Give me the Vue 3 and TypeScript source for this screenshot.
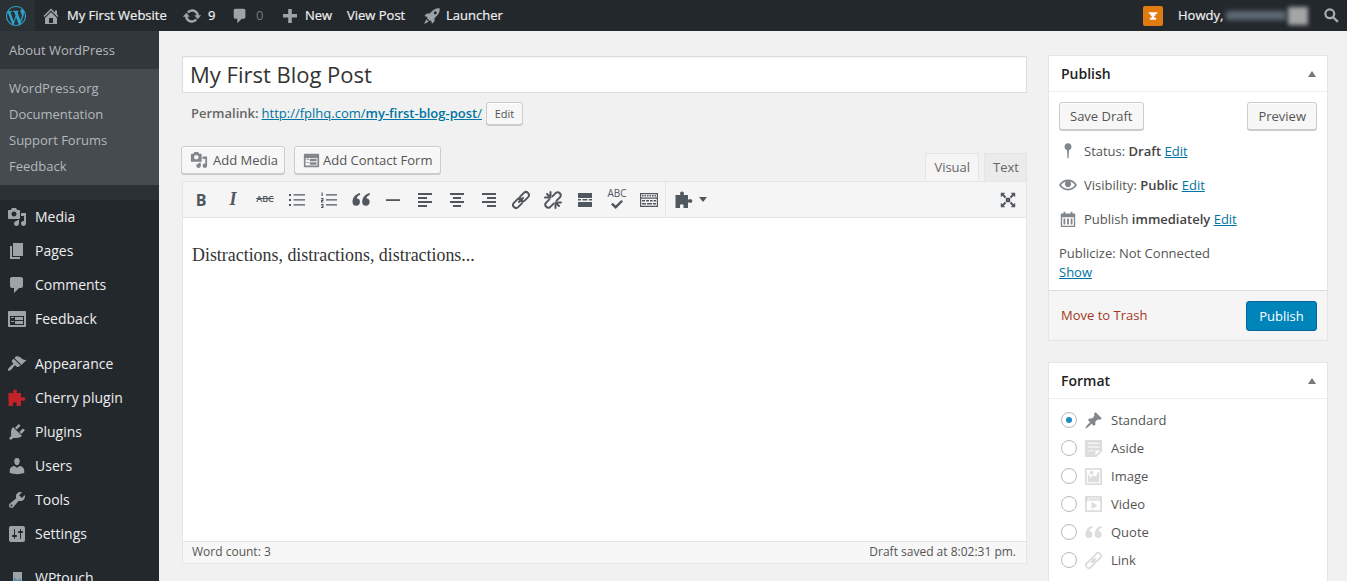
<script setup lang="ts">
const p: Record<string, string> = {
  wp: 'M20 10c0-5.51-4.49-10-10-10C4.48 0 0 4.49 0 10c0 5.52 4.48 10 10 10 5.51 0 10-4.48 10-10zM7.78 15.37L4.37 6.22c.55-.02 1.17-.08 1.17-.08.5-.06.44-1.13-.06-1.11 0 0-1.45.11-2.37.11-.18 0-.37 0-.58-.01C4.12 2.69 6.87 1.11 10 1.11c2.33 0 4.45.87 6.05 2.34-.68-.11-1.65.39-1.65 1.58 0 .74.45 1.36.9 2.1.35.61.55 1.36.55 2.46 0 1.49-1.4 5-1.4 5l-3.03-8.37c.54-.02.82-.17.82-.17.5-.05.44-1.25-.06-1.22 0 0-1.44.12-2.38.12-.87 0-2.33-.12-2.33-.12-.5-.03-.56 1.2-.06 1.22l.92.08 1.26 3.41zM17.41 10c.24-.64.74-1.87.43-4.25.7 1.29 1.05 2.71 1.05 4.25 0 3.29-1.73 6.24-4.4 7.78.97-2.59 1.94-5.2 2.92-7.78zM6.1 18.09C3.12 16.65 1.11 13.53 1.11 10c0-1.3.23-2.48.72-3.59C3.25 10.3 4.67 14.2 6.1 18.09zm4.03-6.63l2.58 6.98c-.86.29-1.76.45-2.71.45-.79 0-1.57-.11-2.29-.33.81-2.38 1.62-4.74 2.42-7.1z',
  home: 'M16 8.5l1.53 1.53-1.06 1.06L10 4.62l-6.47 6.47-1.06-1.06L10 2.5l4 4v-2h2v4zm-6-2.46l6 5.99V18H4v-5.97zM12 17v-5H8v5h4z',
  update: 'M10.2 3.28c3.53 0 6.43 2.61 6.92 6h2.08l-3.5 4-3.5-4h2.32c-.45-1.97-2.21-3.45-4.32-3.45-1.45 0-2.73.71-3.54 1.78L4.95 5.66C6.23 4.2 8.11 3.28 10.2 3.28zm-.4 13.44c-3.52 0-6.43-2.61-6.92-6H.8l3.5-4c1.17 1.33 2.33 2.67 3.5 4H5.48c.45 1.97 2.21 3.45 4.32 3.45 1.45 0 2.73-.71 3.54-1.78l1.71 1.95c-1.28 1.46-3.15 2.38-5.25 2.38z',
  comment: 'M5 2h9c1.1 0 2 .9 2 2v7c0 1.1-.9 2-2 2h-2l-5 5v-5H5c-1.1 0-2-.9-2-2V4c0-1.1.9-2 2-2z',
  plus: 'M17 8v3.5h-5.2V17H8.2v-5.5H3V8h5.2V3h3.6v5z',
  rocket: 'M18.5 1.5c-3.2-.4-6 .7-8.6 3.3L7.5 7.2H4.2L1.5 10l3.4 1-.4 1.4 3.1 3.1 1.4-.4 1 3.4 2.8-2.7v-3.3l2.4-2.4c2.6-2.6 3.7-5.4 3.3-8.6zM13.6 8.2a1.7 1.7 0 1 1 0-3.4 1.7 1.7 0 0 1 0 3.4zM3.7 13.6 1.2 18.8l5.2-2.5z',
  media: 'M13 11V4c0-.55-.45-1-1-1h-1.67L9 1H5L3.67 3H2c-.55 0-1 .45-1 1v7c0 .55.45 1 1 1h10c.55 0 1-.45 1-1zM7 4.5c1.38 0 2.5 1.12 2.5 2.5S8.38 9.5 7 9.5 4.5 8.38 4.5 7 5.62 4.5 7 4.5zM14 6h5v10.5c0 1.38-1.12 2.5-2.5 2.5S14 17.88 14 16.5s1.12-2.5 2.5-2.5c.17 0 .34.02.5.05V9h-3V6zm-4 8.05V13h2v3.5c0 1.38-1.12 2.5-2.5 2.5S7 17.88 7 16.5 8.12 14 9.5 14c.17 0 .34.02.5.05z',
  page: 'M6 15V2h10v13H6zm-1 1h8v2H3V5h2v11z',
  feedback: 'M2 2h16c.55 0 1 .45 1 1v14c0 .55-.45 1-1 1H2c-.55 0-1-.45-1-1V3c0-.55.45-1 1-1zm15 14V7H3v9h14zM4 8v1h3V8H4zm4 0v3h8V8H8zm-4 4v1h3v-1H4zm4 0v3h8v-3H8z',
  brush: 'M14.48 11.06L7.41 3.99l1.5-1.5c.5-.56 2.3-.47 3.51.32 1.21.8 1.43 1.28 2.91 2.1 1.18.64 2.45 1.26 4.45.85zm-.71.71L6.7 4.7 4.93 6.47c-.39.39-.39 1.02 0 1.41l1.06 1.06c.39.39.39 1.03 0 1.42-.6.6-1.43 1.11-2.21 1.69-.35.26-.7.53-1.01.84-1.34 1.34-2.36 3.02-1.64 3.74.69.69 2.39-.31 3.72-1.65.3-.31.58-.66.84-1.01.58-.78 1.09-1.61 1.69-2.21.39-.39 1.03-.39 1.42 0l1.06 1.06c.39.39 1.02.39 1.41 0z',
  puzzle: 'M8 1.5a2 2 0 0 1 2 2c0 .7-.4 1.1-.6 1.5H14v4.400h1.400a1.900 1.900 0 1 1 0 3.200H14V18H9.500v-1.500a1.800 1.800 0 1 0-3.500 0V18H1.500V5h5.100c-.2-.4-.6-.8-.6-1.500a2 2 0 0 1 2-2z',
  plugin: 'M13.11 4.36L9.87 7.6 8 5.73l3.24-3.24c.35-.34 1.05-.2 1.56.32.52.51.66 1.21.31 1.55zm-8 1.77l.91-1.12 9.01 9.01-1.19.84c-.71.71-2.63 1.16-3.82 1.16H6.14L4.9 17.26c-.59.59-1.54.59-2.12 0-.59-.58-.59-1.53 0-2.12l1.24-1.24v-3.88c0-1.13.4-3.19 1.09-3.89zm7.26 3.97l3.24-3.24c.34-.35 1.04-.21 1.55.31.52.51.66 1.21.31 1.55l-3.24 3.25z',
  users: 'M10 9.25c-2.27 0-2.73-3.44-2.73-3.44C7 4.02 7.82 2 9.97 2c2.16 0 2.98 2.02 2.71 3.81 0 0-.41 3.44-2.68 3.44zm0 2.57L12.72 10c2.39 0 4.52 2.33 4.52 4.53v2.49s-3.65 1.13-7.24 1.13c-3.65 0-7.24-1.13-7.24-1.13v-2.49c0-2.25 1.94-4.48 4.47-4.48z',
  tools: 'M16.68 9.77c-1.34 1.34-3.3 1.67-4.95.99l-5.41 6.52c-.99.99-2.59.99-3.58 0s-.99-2.59 0-3.57l6.52-5.42c-.68-1.65-.35-3.61.99-4.95 1.28-1.28 3.12-1.62 4.72-1.06l-2.89 2.89 2.82 2.82 2.86-2.87c.53 1.58.18 3.39-1.08 4.65zM3.81 16.21c.4.39 1.04.39 1.43 0 .4-.4.4-1.04 0-1.43-.39-.4-1.03-.4-1.43 0-.39.39-.39 1.03 0 1.43z',
  settings: 'M18 16V4c0-1.1-.9-2-2-2H4c-1.1 0-2 .9-2 2v12c0 1.1.9 2 2 2h12c1.1 0 2-.9 2-2zM8 11h1c.55 0 1 .45 1 1s-.45 1-1 1H8v1.500c0 .28-.22.5-.5.5s-.5-.22-.5-.5V13H6c-.55 0-1-.45-1-1s.45-1 1-1h1V5.500c0-.28.22-.5.5-.5s.5.22.5.5V11zm5-2h-1c-.55 0-1-.45-1-1s.45-1 1-1h1V5.500c0-.28.22-.5.5-.5s.5.22.5.5V7h1c.55 0 1 .45 1 1s-.45 1-1 1h-1v5.500c0 .28-.22.5-.5.5s-.5-.22-.5-.5V9z',
  wptouch: 'M6 4h9v16H6z',
  pin: 'M10 1.500a3.800 3.800 0 0 1 1.100 7.440L10.600 18h-1.200l-.5-9.060A3.800 3.800 0 0 1 10 1.500z',
  eye: 'M19.700 9.400C17.700 6 14 3.900 10 3.900S2.300 6 .3 9.400L0 10l.3.6c2 3.400 5.700 5.500 9.700 5.500s7.700-2.100 9.700-5.500l.3-.6-.3-.6zM10 14.100c-3.100 0-6-1.600-7.700-4.100C3.600 8 5.700 6.600 8 6.100c-.9.6-1.500 1.700-1.500 2.900 0 1.900 1.600 3.500 3.500 3.500s3.500-1.600 3.500-3.500c0-1.200-.6-2.300-1.500-2.900 2.300.5 4.400 1.900 5.700 3.900-1.700 2.500-4.600 4.100-7.700 4.100z',
  calendar: 'M2 4h3V2h2v2h6V2h2v2h3v15H2zM3.500 8v9.500h13V8zM5 9.500h2v6.500H5zM9 9.500h2v6.500H9zM13 9.500h2v6.500h-2z',
  thumb: 'M10.440 3.020l1.820-1.820 6.360 6.350-1.830 1.820c-1.050-.68-2.480-.57-3.410.36l-.75.75c-.92.93-1.040 2.350-.35 3.410l-1.830 1.820-2.410-2.410-2.800 2.790c-.42.42-3.380 2.710-3.800 2.290s1.860-3.390 2.280-3.810l2.790-2.790L4.100 9.360l1.830-1.820c1.050.69 2.480.57 3.400-.36l.75-.75c.93-.92 1.050-2.350.36-3.410z',
  aside: 'M1 1h18v12l-6 6H1V1zm3 3v1h12V4H4zm0 4v1h12V8H4zm6 5v-1H4v1h6zm2 4l5-5h-5v5z',
  image: 'M2.250 1h15.500c.69 0 1.250.56 1.250 1.250v15.500c0 .69-.56 1.250-1.250 1.250H2.250C1.560 19 1 18.440 1 17.750V2.250C1 1.560 1.560 1 2.250 1zM17 17V3H3v14h14zM10 6c0-1.100-.9-2-2-2s-2 .9-2 2 .9 2 2 2 2-.9 2-2zm3 5s0-6 3-6v10c0 .55-.45 1-1 1H5c-.55 0-1-.45-1-1V8c2 0 3 4 3 4s1-3 3-3 3 2 3 2z',
  video: 'M2 1h16c.55 0 1 .45 1 1v16l-18-.02V2c0-.55.45-1 1-1zm4 1L4 5h1l2-3H6zm4 0H9L7 5h1zm3 0h-1l-2 3h1zm3 0h-1l-2 3h1zm1 14V6H3v10h14zM8 7l6 4-6 4V7z',
  quote: 'M8.800 3C5 4 1.500 7 1.500 12a3.700 3.700 0 1 0 4.200-3.700c.3-1.500 1.500-2.700 3.500-3.500zM18.500 3c-3.800 1-7.300 4-7.300 9a3.700 3.700 0 1 0 4.200-3.700c.3-1.500 1.500-2.700 3.500-3.500z',
  link: 'M9.380 6.380L12.880 2.880A3 3 0 0 1 17.120 7.120L13.620 10.620A3 3 0 0 1 9.380 6.380ZM10.620 13.620L7.120 17.120A3 3 0 0 1 2.880 12.880L6.380 9.380A3 3 0 0 1 10.620 13.620ZM8 12L12 8',
  unlink: 'M9.400 6.400L12.900 2.900A3 3 0 0 1 17.100 7.100L13.600 10.600M10.600 13.600L7.100 17.100A3 3 0 0 1 2.900 12.900L6.400 9.400M4 4L7.500 7.500M16 16L12.500 12.500M7.500 2V5.500M2 7.500H5.500M12.500 18V14.500M18 12.500H14.500',
  ul: 'M2 4h2v2H2zM2 9h2v2H2zM2 14h2v2H2zM6.500 4.300H18v1.300H6.500zM6.500 9.300H18v1.300H6.500zM6.500 14.300H18v1.300H6.500z',
  ol: 'M2.500 2.500h1.200v3.500H2.500zM2 8h2.500v3H3v.6h1.500v.9H2V9.800h1.500v-.9H2zM2 14h2.500v4H2v-.9h1.500v-.7H2.500v-.8h1v-.7H2zM7 4.300h11v1.300H7zM7 9.300h11v1.300H7zM7 14.300h11v1.300H7z',
  hr: 'M3 9.200h14v1.800H3z',
  left: 'M3 3h14v2H3zM3 7h9v2H3zM3 11h14v2H3zM3 15h9v2H3z',
  center: 'M3 3h14v2H3zM6 7h8v2H6zM3 11h14v2H3zM6 15h8v2H6z',
  right: 'M3 3h14v2H3zM8 7h9v2H8zM3 11h14v2H3zM8 15h9v2H8z',
  more: 'M3 3h14v5H3zM3 9h3v1.500H3zM7.500 9h5v1.500h-5zM14 9h3v1.500h-3zM3 12h14v5H3z',
  check: 'M2 8.500 4.300 6.300 8.200 10 15.700 2.500 18 4.700 8.200 14.500z',
  kbd: 'M1 3h18v14H1zM2.200 4.200v3.300h15.600V4.200zM2.200 8.800v7h15.600v-7zM3 5h1.500v1.500H3zM5.500 5H7v1.500H5.500zM8 5h1.500v1.500H8zM10.500 5H12v1.500h-1.500zM13 5h1.500v1.500H13zM15.500 5H17v1.500h-1.500zM3 10h3v1.500H3zM7 10h3v1.500H7zM11 10h2.500v1.500H11zM14.500 10H17v1.500h-2.500zM3 13h4v1.500H3zM8 13h5v1.500H8zM14 13h3v1.500h-3z',
  full: 'M2 2h5L5.300 3.700 8 6.400 6.400 8 3.700 5.300 2 7zM18 2v5l-1.700-1.700L13.600 8 12 6.400l2.700-2.700L13 2zM2 18v-5l1.700 1.700L6.400 12 8 13.600l-2.700 2.700L7 18zM18 18h-5l1.700-1.700L12 13.600l1.600-1.600 2.700 2.700L18 13zM7.500 7.500h5v5h-5z',
  anvil: 'M3 4h14v2.500h-3V9l-2 1.500V13h3v3H5v-3h3v-2.500L6 9V6.500H3z',
}

const stroked = new Set(['link', 'unlink'])

const flyoutLinks = ['WordPress.org', 'Documentation', 'Support Forums', 'Feedback']

const menuGroups = [
  [
    { label: 'Media', icon: 'media' },
    { label: 'Pages', icon: 'page' },
    { label: 'Comments', icon: 'comment' },
    { label: 'Feedback', icon: 'feedback' },
  ],
  [
    { label: 'Appearance', icon: 'brush' },
    { label: 'Cherry plugin', icon: 'puzzle', red: true },
    { label: 'Plugins', icon: 'plugin' },
    { label: 'Users', icon: 'users' },
    { label: 'Tools', icon: 'tools' },
    { label: 'Settings', icon: 'settings' },
  ],
  [{ label: 'WPtouch', icon: 'wptouch' }],
]

const toolIcons = ['ul', 'ol', 'quote', 'hr', 'left', 'center', 'right', 'link', 'unlink', 'more']

const formats = [
  { label: 'Standard', icon: 'thumb', on: true },
  { label: 'Aside', icon: 'aside', on: false },
  { label: 'Image', icon: 'image', on: false },
  { label: 'Video', icon: 'video', on: false },
  { label: 'Quote', icon: 'quote', on: false },
  { label: 'Link', icon: 'link', on: false },
]
</script>

<template>
  <div class="page">
    <header class="bar">
      <div class="bar-wp"><svg class="i20" viewBox="0 0 20 20"><path :d="p.wp" /></svg></div>
      <div class="bar-item site"><svg class="i20" viewBox="0 0 20 20"><path :d="p.home" /></svg><span>My First Website</span></div>
      <div class="bar-item upd"><svg class="i20" viewBox="0 0 20 20"><path :d="p.update" /></svg><span>9</span></div>
      <div class="bar-item com"><svg class="i20" viewBox="0 0 20 20"><path :d="p.comment" /></svg><span class="dim">0</span></div>
      <div class="bar-item new"><svg class="i20" viewBox="0 0 20 20"><path :d="p.plus" /></svg><span>New</span></div>
      <div class="bar-item view"><span>View Post</span></div>
      <div class="bar-item launch"><svg class="i20" viewBox="0 0 20 20"><path :d="p.rocket" /></svg><span>Launcher</span></div>
      <div class="bar-right">
        <div class="orange"><svg viewBox="0 0 20 20"><path :d="p.anvil" /></svg></div>
        <span class="howdy">Howdy,</span>
        <span class="blurred"><i class="b-name"></i><i class="b-ava"></i></span>
        <svg class="search" viewBox="0 0 20 20"><circle cx="8" cy="8" r="5.200" /><path d="M12 12l5.500 5.500" /></svg>
      </div>
    </header>

    <div class="body">
      <aside class="side">
        <div class="fly">
          <div class="fly-top">About WordPress</div>
          <div class="fly-list">
            <div v-for="l in flyoutLinks" :key="l" class="fly-link">{{ l }}</div>
          </div>
        </div>
        <div class="strip"></div>
        <nav v-for="(g, gi) in menuGroups" :key="gi" class="group">
          <div v-for="m in g" :key="m.label" class="mi">
            <svg class="mi-ico" :class="{ red: 'red' in m }" viewBox="0 0 20 20">
              <path :d="p[m.icon]" fill-rule="evenodd" />
              <path v-if="m.icon === 'wptouch'" class="teal" d="M7 9l3 3 4-1.500V19H7z" />
            </svg>
            <span>{{ m.label }}</span>
          </div>
        </nav>
      </aside>

      <main class="main">
        <section class="col">
          <div class="title">My First Blog Post</div>
          <div class="perma">
            <b>Permalink:</b>
            <a class="url">http://fplhq.com/<b>my-first-blog-post</b>/</a>
            <span class="btn tiny">Edit</span>
          </div>

          <div class="tools-row">
            <div class="media-btns">
              <span class="btn mbtn"><svg class="m-ico" viewBox="0 0 20 20"><path :d="p.media" /></svg>Add Media</span>
              <span class="btn mbtn contact"><svg class="m-ico" viewBox="0 0 20 20"><path :d="p.feedback" fill-rule="evenodd" /></svg>Add Contact Form</span>
            </div>
            <div class="tabs">
              <span class="tab active">Visual</span>
              <span class="tab">Text</span>
            </div>
          </div>

          <div class="editor">
            <div class="toolbar">
              <span class="tb t-b">B</span>
              <span class="tb t-i">I</span>
              <span class="tb t-abc">ABC</span>
              <span v-for="t in toolIcons" :key="t" class="tb"><svg class="tb-ico" viewBox="0 0 20 20"><path :d="p[t]" :class="{ st: stroked.has(t) }" fill-rule="evenodd" /></svg></span>
              <span class="tb spell"><em>ABC</em><svg viewBox="0 0 20 16"><path :d="p.check" /></svg></span>
              <span class="tb"><svg class="tb-ico" viewBox="0 0 20 20"><path :d="p.kbd" fill-rule="evenodd" /></svg></span>
              <span class="sep"></span>
              <span class="plug"><svg class="tb-ico" viewBox="0 0 20 20"><path :d="p.puzzle" /></svg><i class="caret"></i></span>
              <span class="tb fs"><svg viewBox="0 0 20 20"><path :d="p.full" /></svg></span>
            </div>
            <div class="content">Distractions, distractions, distractions...</div>
            <div class="status"><span>Word count: 3</span><span>Draft saved at 8:02:31 pm.</span></div>
          </div>
        </section>

        <section class="rail">
          <div class="box publish">
            <div class="box-h"><span>Publish</span><i class="up"></i></div>
            <div class="pub-btns">
              <span class="btn act">Save Draft</span>
              <span class="btn act">Preview</span>
            </div>
            <div class="pub-rows">
              <div class="pub-row"><svg class="pub-ico" viewBox="0 0 20 20"><path :d="p.pin" /></svg><span>Status: <b>Draft</b> <a>Edit</a></span></div>
              <div class="pub-row"><svg class="pub-ico" viewBox="0 0 20 20"><path :d="p.eye" /></svg><span>Visibility: <b>Public</b> <a>Edit</a></span></div>
              <div class="pub-row"><svg class="pub-ico" viewBox="0 0 20 20"><path :d="p.calendar" fill-rule="evenodd" /></svg><span>Publish <b>immediately</b> <a>Edit</a></span></div>
            </div>
            <div class="publicize">Publicize: Not Connected<br /><a>Show</a></div>
            <div class="pub-foot">
              <a class="trash">Move to Trash</a>
              <span class="primary">Publish</span>
            </div>
          </div>

          <div class="box format">
            <div class="box-h"><span>Format</span><i class="up"></i></div>
            <div class="fmt-list">
              <div v-for="f in formats" :key="f.label" class="fmt">
                <span class="radio" :class="{ on: f.on }"></span>
                <svg class="fmt-ico" :class="{ on: f.on }" viewBox="0 0 20 20"><path :d="p[f.icon]" :class="{ st: stroked.has(f.icon) }" fill-rule="evenodd" /></svg>
                <span>{{ f.label }}</span>
              </div>
            </div>
          </div>
        </section>
      </main>
    </div>
  </div>
</template>

<style>
html, body { margin: 0; background: #f1f1f1; overflow: hidden; }
</style>

<style scoped>
.page { width: 1347px; height: 581px; overflow: hidden; display: flex; flex-direction: column; font: 13px/1.4 "Open Sans", sans-serif; color: #444; background: #f1f1f1; }
svg { display: block; flex: none; fill: currentColor; }
.st { fill: none; stroke: currentColor; stroke-width: 2; stroke-linecap: round; }
a { color: #0074a2; text-decoration: underline; }

.bar { height: 31px; flex: none; background: #23282d; color: #eee; display: flex; align-items: center; }
.i20 { width: 20px; height: 20px; color: #9ea3a8; }
.bar-wp { width: 35px; height: 31px; box-sizing: border-box; padding-right: 3px; background: #2b3035; display: flex; align-items: center; justify-content: center; margin-right: 6px; }
.bar-wp .i20 { color: #2ea2cc; }
.bar-item { display: flex; align-items: center; gap: 6px; white-space: nowrap; }
.site { width: 141px; gap: 6px; }
.bar-item span { font-weight: 400; -webkit-text-stroke: .2px #eee; }
.upd { width: 49px; gap: 6px; }
.com { width: 49px; gap: 7px; }
.com .i20 { width: 18px; height: 18px; }
.bar-item span.dim { color: #777; -webkit-text-stroke: 0; }
.new { width: 67px; gap: 5px; }
.view { width: 76px; }
.launch { gap: 5px; }
.launch .i20 { width: 18px; height: 18px; }
.bar-right { margin-left: auto; display: flex; align-items: center; padding-right: 7px; }
.orange { width: 20px; height: 20px; border-radius: 2px; background: #e07b10; color: #fff; margin-right: 15px; }
.orange svg { width: 20px; height: 20px; transform: scale(.62); }
.howdy { width: 48px; -webkit-text-stroke: .2px #eee; }
.blurred { width: 83px; height: 20px; display: flex; align-items: center; gap: 2px; margin-right: 14px; }
.b-name { width: 60px; height: 9px; background: #5f6a74; filter: blur(2.500px); }
.b-ava { width: 20px; height: 18px; background: #a5a5a5; filter: blur(2px); }
.search { width: 17px; height: 17px; fill: none; stroke: #a8adb2; stroke-width: 2.600; }

.body { flex: 1; display: flex; min-height: 0; }
.side { width: 159px; flex: none; background: #23282d; overflow: hidden; color: #eee; font-size: 14px; }
.fly { color: #b4b9be; font-size: 13px; }
.fly-top { height: 38px; line-height: 38px; padding-left: 9px; background: #32373c; }
.fly-list { height: 116px; padding-top: 6px; box-sizing: border-box; background: #464b50; }
.fly-link { height: 26px; line-height: 26px; padding-left: 9px; }
.strip { height: 15px; background: #2c3136; }
.group { padding-bottom: 11px; }
.group + .group + .group { padding: 0; margin-top: -1px; }
.mi { height: 34px; display: flex; align-items: center; padding-left: 7px; gap: 8px; }
.mi-ico { width: 20px; height: 20px; color: #9ea3a8; }
.mi-ico.red { color: #c3222b; }
.teal { fill: #4d8fa0; }

.main { flex: 1; display: flex; padding: 24px 19px 0 23px; gap: 21px; min-width: 0; }
.col { width: 845px; flex: none; }
.title { height: 37px; box-sizing: border-box; margin-top: 1px; padding-left: 7px; border: 1px solid #ddd; background: #fff; font-size: 22px; line-height: 35px; color: #333; box-shadow: inset 0 1px 2px rgba(0,0,0,.05); }
.perma { height: 23px; margin-top: 9px; padding-left: 9px; display: flex; align-items: center; gap: 3px; color: #666; }
.perma > b { font-weight: 600; }
.url b { font-weight: 600; }
.btn { box-sizing: border-box; display: inline-flex; align-items: center; border: 1px solid #ccc; border-radius: 3px; background: #f7f7f7; color: #555; box-shadow: inset 0 1px 0 #fff, 0 1px 0 #ccc; white-space: nowrap; }
.tiny { height: 23px; padding: 0 8px; margin-left: 1px; font-size: 11px; width: 37px; justify-content: center; }
.tools-row { height: 35px; margin-top: 21px; display: flex; justify-content: space-between; align-items: flex-start; }
.media-btns { display: flex; gap: 9px; margin-left: -1px; }
.mbtn { height: 28px; padding: 0 6px 0 8px; gap: 5px; }
.m-ico { width: 18px; height: 18px; color: #82878c; }
.contact { gap: 3px; padding-right: 8px; }
.contact .m-ico { width: 17px; height: 17px; }
.tabs { display: flex; gap: 5px; margin-top: 7px; }
.tab { height: 28px; box-sizing: border-box; line-height: 27px; padding: 0 7px 0 8px; color: #666; background: #ebebeb; border: 1px solid #e5e5e5; border-bottom: 0; }
.tab.active { background: #f5f5f5; padding: 0 8px; }
.editor { border: 1px solid #e5e5e5; border-top: 0; }
.toolbar { height: 37px; box-sizing: border-box; display: flex; align-items: center; padding-left: 2px; background: #f5f5f5; border-top: 1px solid #e5e5e5; border-bottom: 1px solid #e5e5e5; color: #50575e; }
.tb { width: 32px; height: 30px; flex: none; display: flex; align-items: center; justify-content: center; }
.tb-ico { width: 20px; height: 20px; }
.t-b { font: 700 16px "Open Sans", sans-serif; }
.t-i { font: italic 700 18px "Liberation Serif", serif; }
.t-abc { font-size: 9px; font-weight: 600; text-decoration: line-through; }
.spell { flex-direction: column; line-height: 9px; }
.spell em { font-style: normal; font-size: 10px; }
.spell svg { width: 16px; height: 12px; margin-top: 0; }
.sep { width: 1px; height: 36px; background: #e5e5e5; }
.plug { display: flex; align-items: center; gap: 5px; margin-left: 8px; }
.caret { width: 0; height: 0; border: 4px solid transparent; border-top: 5px solid #50575e; border-bottom: 0; }
.fs { margin-left: auto; margin-right: 2px; }
.fs svg { width: 18px; height: 18px; }
.content { height: 323px; box-sizing: border-box; background: #fff; padding: 25px 9px 0; font: 17.900px/24px "Liberation Serif", serif; color: #333; }
.status { height: 22px; box-sizing: border-box; border-top: 1px solid #e5e5e5; background: #f7f7f7; display: flex; justify-content: space-between; align-items: center; padding: 0 10px 0 9px; font-size: 12px; color: #555; }

.rail { width: 280px; flex: none; }
.box { border: 1px solid #e5e5e5; background: #fff; box-sizing: border-box; }
.box-h { height: 36px; box-sizing: border-box; border-bottom: 1px solid #eee; display: flex; align-items: center; justify-content: space-between; padding: 0 11px 0 12px; font-size: 14px; font-weight: 600; color: #222; }
.up { width: 0; height: 0; border: 4px solid transparent; border-bottom: 6px solid #777; border-top: 0; }
.pub-btns { display: flex; justify-content: space-between; padding: 10px 10px 0; }
.act { height: 28px; padding: 0 10px; }
.pub-rows { padding-top: 4px; }
.pub-row { height: 34px; display: flex; align-items: center; padding-left: 10px; gap: 7px; color: #555; }
.pub-row b { font-weight: 600; color: #444; }
.pub-ico { width: 18px; height: 18px; color: #82878c; }
.publicize { box-sizing: border-box; height: 54px; padding: 8px 10px 0; line-height: 19px; color: #555; }
.pub-foot { height: 50px; box-sizing: border-box; background: #f5f5f5; border-top: 1px solid #ddd; display: flex; justify-content: space-between; align-items: center; padding: 0 10px 0 12px; }
.trash { color: #a4381f; text-decoration: none; }
.primary { height: 30px; width: 71px; box-sizing: border-box; line-height: 28px; text-align: center; background: #0085ba; border: 1px solid #006799; border-radius: 3px; color: #fff; }
.format { margin-top: 21px; }
.fmt-list { padding: 7px 0 24px; }
.fmt { height: 28px; display: flex; align-items: center; padding-left: 12px; color: #555; }
.radio { width: 16px; height: 16px; box-sizing: border-box; border: 1px solid #b4b9be; border-radius: 50%; background: #fff; margin-right: 7px; display: flex; align-items: center; justify-content: center; }
.radio.on::after { content: ""; width: 6px; height: 6px; border-radius: 50%; background: #1e8cbe; }
.fmt-ico { width: 19px; height: 19px; color: #ddd; margin-right: 8px; }
.fmt-ico.on { color: #82878c; }
</style>
